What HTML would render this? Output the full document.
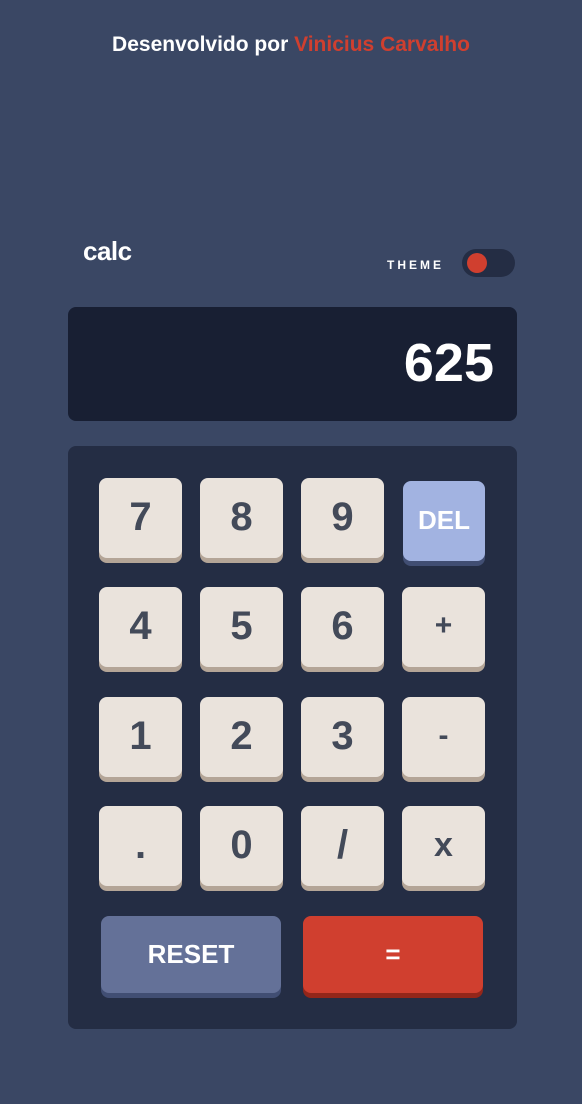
<!DOCTYPE html>
<html><head><style>
body{margin:0;width:582px;height:1104px;background:#3a4764;font-family:"Liberation Sans",sans-serif;position:relative;overflow:hidden}
.a{position:absolute}
.k{position:absolute;width:83px;height:80px;background:#eae3dc;border-radius:8px;box-shadow:0 5px 0 #b4a597;color:#434a59;font-weight:bold;font-size:40px;text-align:center;line-height:78px}
</style></head><body>
<div class="a" style="top:33px;left:0;width:582px;text-align:center;color:#fff;font-weight:bold;font-size:21px">Desenvolvido por <span style="color:#d03f2f">Vinicius Carvalho</span></div>
<div class="a" style="left:83px;top:236px;color:#fff;font-weight:bold;font-size:26px;letter-spacing:-0.5px">calc</div>
<div class="a" style="left:387px;top:258px;color:#fff;font-weight:bold;font-size:12px;letter-spacing:3px">THEME</div>
<div class="a" style="left:462px;top:249px;width:53px;height:28px;border-radius:14px;background:#242d44"></div>
<div class="a" style="left:467px;top:253px;width:20px;height:20px;border-radius:50%;background:#d03f2f"></div>
<div class="a" style="left:68px;top:307px;width:449px;height:114px;border-radius:8px;background:#181f33"></div>
<div class="a" style="right:88px;top:332px;color:#fff;font-weight:bold;font-size:54px;line-height:62px">625</div>
<div class="a" style="left:68px;top:446px;width:449px;height:583px;border-radius:8px;background:#242d44"></div>
<div class="k" style="left:99px;top:478px">7</div>
<div class="k" style="left:200px;top:478px">8</div>
<div class="k" style="left:301px;top:478px">9</div>
<div class="k" style="left:403px;top:481px;width:82px;background:#a2b3e1;box-shadow:0 5px 0 #414e73;color:#fff;font-size:26px">DEL</div>
<div class="k" style="left:99px;top:587px">4</div>
<div class="k" style="left:200px;top:587px">5</div>
<div class="k" style="left:301px;top:587px">6</div>
<div class="k" style="left:402px;top:587px;font-size:30px">+</div>
<div class="k" style="left:99px;top:697px">1</div>
<div class="k" style="left:200px;top:697px">2</div>
<div class="k" style="left:301px;top:697px">3</div>
<div class="k" style="left:402px;top:697px;font-size:30px">-</div>
<div class="k" style="left:99px;top:806px">.</div>
<div class="k" style="left:200px;top:806px">0</div>
<div class="k" style="left:301px;top:806px">/</div>
<div class="k" style="left:402px;top:806px;font-size:34px">x</div>
<div class="k" style="left:101px;top:916px;width:180px;height:77px;background:#647198;box-shadow:0 5px 0 #414e73;color:#fff;font-size:26px;line-height:76px">RESET</div>
<div class="k" style="left:303px;top:916px;width:180px;height:77px;background:#d03f2f;box-shadow:0 5px 0 #93261a;color:#fff;font-size:26px;line-height:76px">=</div>
</body></html>
